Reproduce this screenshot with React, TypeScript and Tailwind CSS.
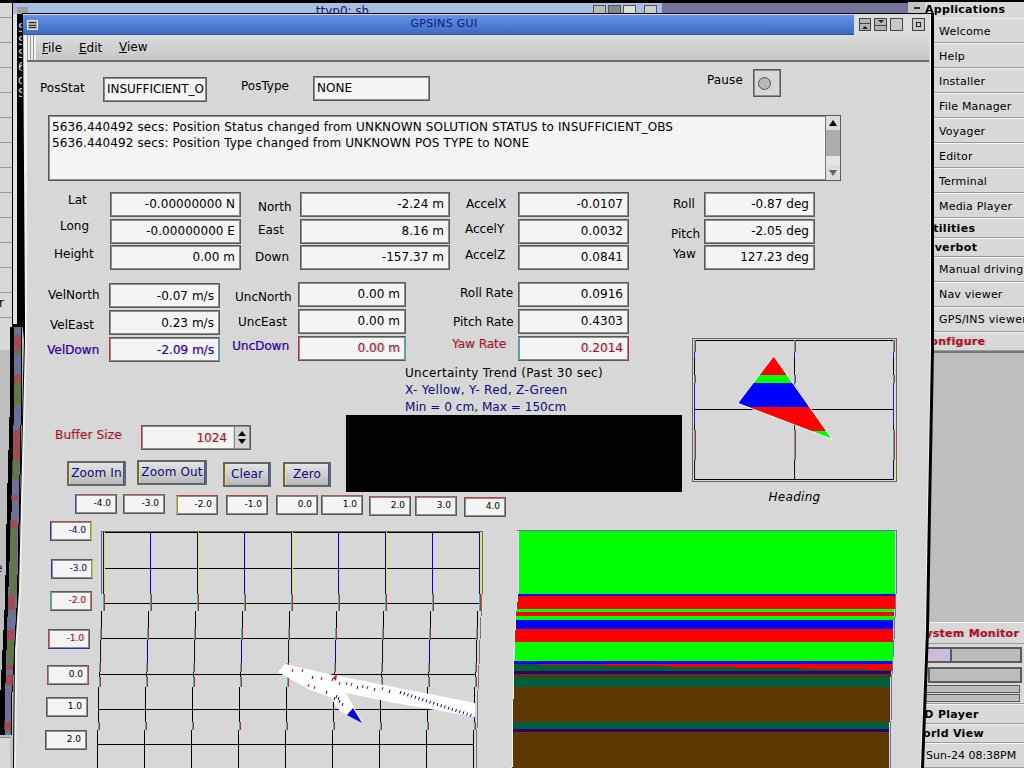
import React from 'react';

const FONT = "font-['DejaVu_Sans','Liberation_Sans',sans-serif]";
const BLUE = 'text-[#0808b0] [text-shadow:1px_0_0_rgba(220,220,30,0.55)]';
const RED = 'text-[#c80014] [text-shadow:1px_0_0_rgba(40,200,200,0.6)]';
const MIX = 'text-[#0808b8] [text-shadow:1px_0_0_rgba(220,30,30,0.45)]';
const BOX = 'border border-[#5a5a5a] shadow-[inset_0_0_0_1px_#8c8c8c]';

function Label({ text, className = '' }: { text: string; className?: string }) {
  return <span className={`block whitespace-nowrap text-[12px] leading-[14px] ${className}`}>{text}</span>;
}

function Field({ value, className = '', tone = '' }: { value: string; className?: string; tone?: string }) {
  return (
    <div className={`h-[25px] ${BOX} bg-[#f4f4f4] flex items-center justify-end pr-[5px] text-[12px] tracking-[0.04px] text-black whitespace-nowrap ${className}`}>
      <span className={tone}>{value}</span>
    </div>
  );
}

function Tick({ value, className = '', tone = '' }: { value: string; className?: string; tone?: string }) {
  return (
    <div className={`w-[42px] h-[20px] ${BOX} bg-[#f4f4f4] flex items-center justify-end pr-[5px] text-[9px] text-black ${className}`}>
      <span className={tone}>{value}</span>
    </div>
  );
}

function Btn({ text, className = '' }: { text: string; className?: string }) {
  return (
    <button className={`h-[25px] pb-[2px] border-2 border-[#666] shadow-[inset_1px_0_0_#e8e840,inset_-1px_0_0_#4848c0] bg-gradient-to-b from-[#e4e4e4] to-[#b8b8b8] text-[12px] tracking-[0.15px] whitespace-nowrap ${BLUE} ${className}`}>
      {text}
    </button>
  );
}

function Stripes({ className = '' }: { className?: string }) {
  return (
    <div className={`bg-[#a8a8a8] border border-[#e8e8e8] flex flex-col justify-evenly px-px ${className}`}>
      <div className="h-px bg-[#333]" />
      <div className="h-px bg-[#333]" />
      <div className="h-px bg-[#333]" />
    </div>
  );
}

const groupOne = [
  { l: 'Lat', lc: 'ml-[20px] mt-px', v: '-0.00000000 N', n: 'North', nc: 'ml-[17px] mt-[8px]', nv: '-2.24 m', a: 'AccelX', ac: 'ml-[16px] mt-[5px]', av: '-0.0107', r: 'Roll', rc: 'ml-[44px] mt-[5px]', rv: '-0.87 deg' },
  { l: 'Long', lc: 'ml-[12px]', v: '-0.00000000 E', n: 'East', nc: 'ml-[17px] mt-[4px]', nv: '8.16 m', a: 'AccelY', ac: 'ml-[15px] mt-[3px]', av: '0.0032', r: 'Pitch', rc: 'ml-[42px] mt-[8px]', rv: '-2.05 deg' },
  { l: 'Height', lc: 'ml-[6px] mt-[2px]', v: '0.00 m', n: 'Down', nc: 'ml-[14px] mt-[5px]', nv: '-157.37 m', a: 'AccelZ', ac: 'ml-[15px] mt-[3px]', av: '0.0841', r: 'Yaw', rc: 'ml-[44px] mt-[2px]', rv: '127.23 deg' },
];

const groupTwo = [
  { l: 'VelNorth', lc: 'mt-[6px]', v: '-0.07 m/s', fc: 'mt-px', n: 'UncNorth', nc: 'ml-[15px] mt-[8px]', nv: '0.00 m', a: 'Roll Rate', ac: 'ml-[54px] mt-[4px]', av: '0.0916', t: '' },
  { l: 'VelEast', lc: 'ml-[2px] mt-[9px]', v: '0.23 m/s', fc: 'mt-px', n: 'UncEast', nc: 'ml-[18px] mt-[6px]', nv: '0.00 m', a: 'Pitch Rate', ac: 'ml-[47px] mt-[6px]', av: '0.4303', t: '' },
  { l: 'VelDown', lc: `ml-[-1px] mt-[7px] ${MIX}`, v: '-2.09 m/s', fc: 'mt-px border-l-[#c03030] border-r-[#30b0b0]', n: 'UncDown', nc: `ml-[12px] mt-[3px] ${MIX}`, nv: '0.00 m', a: 'Yaw Rate', ac: `ml-[46px] mt-px ${RED}`, av: '0.2014', t: 'x' },
];

const xTicks = [
  { v: '-4.0', c: 'ml-[75px] border-t-[#a06060] border-l-[#4040c0]' },
  { v: '-3.0', c: 'ml-[6px] border-t-[#a06060]' },
  { v: '-2.0', c: 'ml-[11px] mt-px border-t-[#c04040] border-l-[#c8c820]' },
  { v: '-1.0', c: 'ml-[8px] mt-px border-t-[#c04040]' },
  { v: '0.0', c: 'ml-[8px] mt-px border-t-[#a06060]' },
  { v: '1.0', c: 'ml-[3px] mt-px border-t-[#a06060]' },
  { v: '2.0', c: 'ml-[6px] mt-[2px] border-t-[#a06060]' },
  { v: '3.0', c: 'ml-[4px] mt-[2px] border-t-[#a06060]' },
  { v: '4.0', c: 'ml-[7px] mt-[3px] border-t-[#c04040]' },
];

const yTicks = [
  { v: '-4.0', c: 'ml-[5px] mt-[4px] border-t-[#c04040] border-l-[#3030c0] border-r-[#c8c820]', t: BLUE },
  { v: '-3.0', c: 'ml-[6px] mt-[18px] border-l-[#3030c0] border-r-[#c8c820]', t: BLUE },
  { v: '-2.0', c: 'ml-[5px] mt-[12px] border-l-[#30b0b0] border-r-[#c04040]', t: RED },
  { v: '-1.0', c: 'ml-[3px] mt-[18px] border-l-[#c04040] border-b-[#3030c0]', t: RED },
  { v: '0.0', c: 'ml-[2px] mt-[16px] border-l-[#c04040] border-r-[#c04040]', t: '' },
  { v: '1.0', c: 'ml-[1px] mt-[12px]', t: '' },
  { v: '2.0', c: 'ml-0 mt-[13px]', t: '' },
];

// [y0, y1, x shift, colour kind]: the picture tears sideways on the way down
const tears: [number, number, number, string][] = [
  [532, 594, 0, 'by'],
  [594, 611, 0, 'rc'],
  [611, 628, -2, 'k'],
  [628, 640, -2.5, 'rc'],
  [640, 663, -3, 'by'],
  [663, 672, -3.5, 'rc'],
  [672, 677, -4, 'k'],
  [677, 687, -4, 'rc'],
  [687, 722, -5, 'k'],
  [722, 730, -5, 'rc'],
  [730, 768, -6, 'k'],
];

const gridX = [103, 150, 197, 244, 291, 338, 385, 432, 479];
const gridY: [number, number, number][] = [
  [532, 103, 480],
  [568, 103, 480],
  [603, 103, 480],
  [638, 101, 477],
  [674, 99, 476],
  [709, 98, 475],
  [744, 97, 473],
];

const redDash = [[293, 669], [303, 669], [322, 677], [340, 682], [347, 682], [352, 683], [363, 685], [368, 686], [383, 687], [309, 684], [315, 686]];
const blueDash = [
  [313, 676], [333, 678], [358, 686], [375, 688], [390, 690], [327, 691], [335, 697], [340, 700], [343, 703], [337, 695], [339, 697],
  ...Array.from({ length: 20 }, (_, i) => [401 + i * 3.7, 691 + i * 1.2]),
];

function GroundChart() {
  return (
    <svg width={390} height={251} viewBox="95 517 390 251" shapeRendering="crispEdges" className="shrink-0">
      <path d="M101 531H482V594M101 531V594" stroke="#666" strokeWidth={1} fill="none" />
      <path d="M482 594L480 640L478 690L476 768" stroke="#777" strokeWidth={1} fill="none" />
      {gridY.map(([y, a, b]) => (
        <line key={y} x1={a} x2={b} y1={y} y2={y} stroke="#000" />
      ))}
      {gridX.map((x, i) =>
        tears.map(([a, b, dx, kind]) => (
          <g key={`${x}-${a}`}>
            {kind === 'k' && <line x1={x + dx} x2={x + dx} y1={a} y2={b} stroke="#000" />}
            {kind === 'by' && <line x1={x + dx} x2={x + dx} y1={a} y2={b} stroke="#0000e0" />}
            {kind === 'by' && i % 2 === 0 && <line x1={x + dx + 1} x2={x + dx + 1} y1={a} y2={b} stroke="#e8e800" />}
            {kind === 'rc' && <line x1={x + dx} x2={x + dx} y1={a} y2={b} stroke="#20c0c0" />}
            {kind === 'rc' && <line x1={x + dx + 1} x2={x + dx + 1} y1={a} y2={b} stroke="#e02020" />}
          </g>
        )),
      )}
      <polygon
        shapeRendering="auto"
        points="278,672 285,664 333,675 475,703 475,717 395,703 346,693 363,723 340,711 330,697 310,690"
        fill="#fff"
      />
      {redDash.map(([x, y]) => (
        <line key={`r${x}`} x1={x} y1={y} x2={x - 1} y2={y + 3} stroke="#f00000" shapeRendering="auto" />
      ))}
      {blueDash.map(([x, y]) => (
        <line key={`b${x}`} x1={x} y1={y} x2={x - 1} y2={y + 3} stroke="#0000e0" shapeRendering="auto" />
      ))}
      <polygon shapeRendering="auto" points="333,678 337,674 336,681" fill="#f00000" />
      <polygon shapeRendering="auto" points="347,715 353,708 362,723" fill="#0000e0" />
    </svg>
  );
}

const bands: [number, number, number, number, string][] = [
  [531, 594, 518, 895, '#00ff00'],
  [594, 596, 517, 895, '#0000ff'],
  [596, 609, 517, 895, '#ff0000'],
  [609, 612, 516, 894, '#00ff00'],
  [612, 616, 516, 894, '#ff0000'],
  [616, 620, 515, 894, '#00ff00'],
  [620, 629, 515, 893, '#0000ff'],
  [629, 642, 515, 893, '#ff0000'],
  [642, 661, 515, 893, '#00ff00'],
  [661, 664, 514, 892, '#0000ff'],
  [664, 671, 514, 892, '#005f3a'],
  [671, 674, 514, 891, '#300070'],
  [674, 677, 513, 891, '#5c3700'],
  [677, 687, 513, 890, '#005f3a'],
  [687, 722, 513, 890, '#5c3700'],
  [722, 729, 513, 889, '#005f3a'],
  [729, 732, 512, 889, '#300070'],
  [732, 768, 512, 889, '#5c3700'],
];

const wedge = [
  [538, 892, 1],
  [604, 892, 2],
  [670, 892, 3],
  [735, 892, 4],
  [801, 892, 5],
  [867, 892, 6],
];

function HorizonChart() {
  return (
    <svg width={390} height={251} viewBox="510 517 390 251" shapeRendering="crispEdges" className="ml-[25px] shrink-0">
      <path d="M517 530.5H896V594L894 640L892 674L890 768" stroke="#6a6ac0" fill="none" />
      {bands.map(([a, b, l, r, c]) => (
        <rect key={a} x={l} y={a} width={r - l} height={b - a} fill={c} />
      ))}
      {wedge.map(([x, r, h]) => (
        <rect key={x} x={x} y={664} width={r - x} height={h} fill="#ff0000" />
      ))}
      <path d="M518 531V594L516 610L514 650L513 700L512 768" stroke="#f2f2f2" fill="none" />
    </svg>
  );
}

function HeadingGauge() {
  const seg = (x: number, a: number, b: number, c: string) => (
    <line key={`${x}${a}${c}`} x1={x} x2={x} y1={a} y2={b} stroke={c} />
  );
  return (
    <svg width={206} height={146} viewBox="692 337 206 146" shapeRendering="crispEdges" className="block">
      <defs>
        <linearGradient id="hdg" gradientUnits="userSpaceOnUse" x1="0" x2="0" y1="356" y2="440">
          <stop offset="0.226" stopColor="#ff0000" />
          <stop offset="0.226" stopColor="#00ff00" />
          <stop offset="0.325" stopColor="#00ff00" />
          <stop offset="0.325" stopColor="#0000ff" />
          <stop offset="0.611" stopColor="#0000ff" />
          <stop offset="0.611" stopColor="#ff0000" />
          <stop offset="0.889" stopColor="#ff0000" />
          <stop offset="0.889" stopColor="#00ff00" />
        </linearGradient>
      </defs>
      <rect x={692.5} y={338.5} width={204} height={143} fill="none" stroke="#666" />
      <rect x={694.5} y={340.5} width={199} height={138.5} fill="none" stroke="#000" />
      <line x1={695} x2={893} y1={409} y2={409} stroke="#000" />
      <line x1={794} x2={794} y1={341} y2={479} stroke="#000" />
      {[694, 794, 893].flatMap((x) => [
        seg(x, 340, 352, '#20c0c0'),
        seg(x + 1, 340, 352, '#e02020'),
        seg(x, 352, 358, '#2020d0'),
        seg(x, 375, 383, '#20c0c0'),
        seg(x + 1, 375, 383, '#e02020'),
        seg(x, 383, 425, '#2020d0'),
        seg(x, 430, 460, '#20c0c0'),
        seg(x + 1, 430, 460, '#e02020'),
        seg(x, 460, 479, '#0000e0'),
        seg(x + 1, 460, 479, '#e8e800'),
      ])}
      <polygon
        points="773.7,356 832.3,439.3 737.7,403.3"
        fill="url(#hdg)"
        stroke="#fff"
        strokeWidth={1}
        shapeRendering="auto"
      />
    </svg>
  );
}

const sideRows = ['Welcome', 'Help', 'Installer', 'File Manager', 'Voyager', 'Editor', 'Terminal', 'Media Player'];

function SideRow({ text, className = '' }: { text: string; className?: string }) {
  return (
    <div className={`flex items-center border-b border-b-[#9a9a9a] border-t border-t-[#f2f2f2] text-[11px] text-black whitespace-nowrap ${className}`}>
      {text}
    </div>
  );
}

function SideHead({ text, className = '', tone = '' }: { text: string; className?: string; tone?: string }) {
  return (
    <div className={`flex items-center pt-[2px] border-b border-b-[#9a9a9a] border-t border-t-[#f2f2f2] text-[11px] font-bold tracking-[0.3px] whitespace-nowrap ${tone || 'text-black'} ${className}`}>
      {text}
    </div>
  );
}

function LeftNoise() {
  const tints: [number, number, string][] = [
    [335, 350, '#b04040'], [350, 355, '#5c7a30'], [375, 383, '#b04040'], [383, 405, '#5c7a30'],
    [430, 460, '#b04040'], [460, 480, '#5c7a30'], [495, 500, '#b04040'], [520, 528, '#b04040'],
    [528, 595, '#5c7a30'], [595, 610, '#b04040'], [630, 640, '#b04040'], [640, 665, '#5c7a30'],
    [665, 670, '#b04040'], [675, 685, '#b04040'], [722, 730, '#b04040'],
  ];
  return (
    <svg width={28} height={468} viewBox="0 300 28 468" shapeRendering="crispEdges" className="absolute left-0 top-[300px]">
      <polygon points="10,327 22,327 22,400 20,500 18,600 12,700 12,735 0,735 0,700 5,600 7,500 10,400" fill="#000" />
      <polygon points="14,327 21,327 21,400 19,500 17,600 11,700 11,735 5,735 5,700 8,600 12,500 14,400" fill="#6f6f98" />
      {tints.map(([a, b, c]) => {
        const off = Math.max(0, a - 400) * 0.03;
        return <rect key={a} x={14 - off} y={a} width={7} height={b - a} fill={c} opacity={0.75} />;
      })}
    </svg>
  );
}

export default function App() {
  return (
    <div className={`relative w-[1024px] h-[768px] overflow-hidden bg-[#bebebe] text-black ${FONT}`}>
      {/* left launcher, mostly hidden */}
      <div className="absolute left-0 top-0 w-[12px] h-[350px] bg-[#d8d8d8] flex flex-col pt-[17px]">
        {Array.from({ length: 13 }, (_, i) => (
          <div key={i} className="h-[25px] shrink-0 border-t border-t-[#9a9a9a] flex items-end text-[12px]">
            <span className="ml-[-1px] mb-[5px]">{i === 11 ? 'r' : ''}</span>
          </div>
        ))}
      </div>
      <div className="absolute left-0 top-[737px] w-[10px] h-[31px] bg-[#d8d8d8] border-t border-t-[#888]" />
      <span className={`absolute left-[-5px] top-[561px] text-[12px] leading-[14px] ${BLUE}`}>e</span>

      {/* window behind */}
      <div className="absolute left-0 top-0 w-full h-[3px] bg-black" />
      <div className="absolute left-[12px] top-[3px] w-[650px] h-[324px] bg-black flex">
        <div className="ml-px mt-[11px] w-[4px] h-[310px] bg-[#e2e2e2]" />
        <div className="absolute left-[1px] top-0 w-[649px] h-[11px] bg-[#a8bfe0] flex justify-center">
          <div className="absolute left-[4px] top-[4px] w-[11px] h-[7px] bg-[#a0a0a0]" />
          <span className="mt-[1px] ml-[10px] text-[12px] leading-[14px] text-[#10107a]">ttyp0: sh</span>
          <div className="absolute right-[5px] top-[2px] flex gap-[2px]">
            <div className="w-[13px] h-[9px] bg-[#bbb] border border-[#555]" />
            <div className="w-[13px] h-[9px] bg-[#888] border border-[#555]" />
            <div className="w-[13px] h-[9px] bg-[#ddd] border border-[#555]" />
            <div className="ml-[6px] w-[13px] h-[9px] bg-[#ccc] border border-[#555]" />
          </div>
        </div>
        <div className="mt-[19px] ml-px text-[12px] leading-[13px] text-[#ddd] flex flex-col">
          {['S', 'S', 'S', '6', 'd', 'S'].map((c, i) => (
            <span key={i}>{c}</span>
          ))}
        </div>
      </div>
      <div className="absolute left-[662px] top-[3px] w-[250px] h-[11px] bg-[#74749a]" />
      <LeftNoise />

      {/* applications panel */}
      <div className="absolute left-[908px] top-0 w-[116px] h-[768px] flex flex-col">
        <div className="h-[3px] bg-black -mb-px" />
        <div className="relative h-[16px] bg-[#d8d8d8] flex items-center pl-[17px] text-[11px] font-bold tracking-[0.3px]">
          <div className="absolute left-[0px] top-0 w-[17px] h-[11px] bg-[#c4c4c4] flex items-center justify-center">
            <div className="w-[6px] h-[2px] bg-[#333]" />
          </div>
          Applications
        </div>
        <div className="bg-[#d8d8d8]">
          {sideRows.map((r) => (
            <SideRow key={r} text={r} className="h-[25px] pl-[31px] pt-[3px] tracking-[0.2px]" />
          ))}
          <SideHead text="Utilities" className="h-[20px] pl-[16px]" />
          <SideHead text="Overbot" className="h-[19px] pl-[17px]" />
          <SideRow text="Manual driving" className="h-[25px] pl-[31px] pt-[2px] tracking-[0.2px]" />
          <SideRow text="Nav viewer" className="h-[25px] pl-[31px] pt-[2px] tracking-[0.2px]" />
          <SideRow text="GPS/INS viewer" className="h-[25px] pl-[31px] pt-[2px] tracking-[0.25px]" />
          <SideHead text="Configure" className="h-[19px] pl-[14px]" tone={RED} />
        </div>
        <div className="h-[271px] bg-[#bebebe] border-t-2 border-t-[#777]" />
        <div className="bg-[#d8d8d8]">
          <SideHead text="System Monitor" className="h-[22px] pl-[9px]" tone={RED} />
          <div className="h-[60px] pt-[3px] pl-[9px] pr-[2px] border-b border-b-[#9a9a9a] flex flex-col">
            <div className="h-[16px] flex border-2 border-[#5a5a5a] bg-[#bcbcbc]">
              <div className="w-[33px] bg-[#cdbcd9] border-r-2 border-r-[#5a5a5a]" />
            </div>
            <div className="mt-[4px] ml-[11px] h-[16px] border-2 border-[#5a5a5a] bg-[#bcbcbc]" />
            <div className="mt-[2px] mr-[2px] h-[8px] border border-[#5a5a5a] bg-[#bcbcbc]" />
            <div className="mt-[1px] mr-[2px] h-[8px] border border-[#5a5a5a] bg-[#bcbcbc]" />
          </div>
          <SideHead text="CD Player" className="h-[20px] pl-[8px]" />
          <SideHead text="World View" className="h-[19px] pl-[3px]" />
          <SideRow text="Sun-24 08:38PM" className="h-[25px] pl-[18px] pt-[2px]" />
        </div>
      </div>

      {/* GPSINS window frame */}
      <div className="absolute inset-0 bg-black [clip-path:polygon(22px_13px,934px_13px,934px_350px,931px_510px,929px_630px,924px_768px,13px_768px,14px_650px,18px_590px,20px_500px,24px_340px,22px_320px)]" />
      <div className="absolute inset-0 bg-[#efefef] [clip-path:polygon(23px_14px,931px_14px,931px_350px,928px_510px,926px_630px,921px_768px,14px_768px,15px_650px,19px_590px,21px_500px,25px_340px,25px_320px)]" />

      <div className="absolute inset-0 bg-[#d7d7d7] flex flex-col pt-[15px] [clip-path:polygon(23px_14px,930px_14px,930px_350px,927px_510px,925px_630px,920px_768px,16px_768px,17px_650px,21px_590px,23px_500px,27px_340px,27px_35px,23px_35px)]">
        {/* title bar */}
        <div className="ml-[23px] w-[907px] h-[20px] flex shrink-0">
          <div className="relative flex-1 h-full bg-gradient-to-b from-[#6592e6] to-[#3d6bc5] border-b border-b-[#2f4f90] flex items-center justify-center">
            <Stripes className="absolute left-[4px] top-[5px] w-[11px] h-[10px]" />
            <span className="ml-[11px] text-[11px] tracking-[0.3px] text-[#101a78]">GPSINS GUI</span>
          </div>
          <div className="w-[76px] h-full bg-[#dcdcdc] flex items-start gap-[3px] pt-[3px] pl-[5px]">
            <div className="w-[12px] h-[13px] bg-[#b4b4b4] border border-[#444] flex flex-col justify-end items-center">
              <div className="w-full h-px bg-[#444] mb-[2px]" />
              <div className="w-0 h-0 border-x-[3px] border-x-transparent border-b-[3px] border-b-[#222] mb-px" />
            </div>
            <div className="w-[13px] h-[13px] bg-[#b4b4b4] border border-[#444] flex flex-col items-center">
              <div className="w-0 h-0 border-x-[3px] border-x-transparent border-t-[3px] border-t-[#222] mt-px" />
              <div className="w-full h-px bg-[#444] mt-[2px]" />
            </div>
            <div className="w-[13px] h-[13px] bg-[#c8c8c8] border border-[#444]" />
            <div className="ml-[6px] w-[13px] h-[13px] bg-[#c8c8c8] border border-[#444] flex items-center justify-center">
              <div className="w-[5px] h-[5px] border border-[#222]" />
            </div>
          </div>
        </div>

        {/* menu bar */}
        <div className="ml-[27px] w-[902px] h-[27px] shrink-0 flex items-center bg-gradient-to-b from-[#dcdcdc] to-[#c6c6c6] border-b-2 border-b-[#6c6c6c] text-[12px]">
          <div className="w-[9px] h-full bg-[repeating-linear-gradient(90deg,#9a9a9a_0,#9a9a9a_1px,#eeeeee_1px,#eeeeee_3px)]" />
          <div className="ml-[6px] w-[37px]"><u>F</u>ile</div>
          <div className="w-[40px]"><u>E</u>dit</div>
          <div className="mt-[-2px]"><u>V</u>iew</div>
        </div>

        {/* status row */}
        <div className="ml-[40px] mt-[7px] h-[33px] flex items-start shrink-0">
          <Label text="PosStat" className="w-[63px] mt-[12px]" />
          <div className={`w-[104px] h-[25px] mt-[8px] ${BOX} bg-[#f4f4f4] flex items-center pl-[3px] text-[12px] tracking-[-0.05px] whitespace-nowrap overflow-hidden`}>
            <span className="mt-[-1px]">INSUFFICIENT_O</span>
          </div>
          <Label text="PosType" className="ml-[34px] w-[72px] mt-[10px]" />
          <div className={`w-[117px] h-[25px] mt-[7px] ${BOX} bg-[#f4f4f4] flex items-center pl-[3px] text-[12px]`}>
            <span className="mt-[-1px]">NONE</span>
          </div>
          <Label text="Pause" className="ml-[277px] w-[46px] mt-[4px] tracking-[0.15px]" />
          <div className={`w-[28px] h-[28px] ${BOX} flex items-center pl-[4px]`}>
            <div className="w-[13px] h-[13px] rounded-full bg-[#b8b8b8] border border-[#555]" />
          </div>
        </div>

        {/* log */}
        <div className={`ml-[48px] mt-[13px] w-[793px] h-[66px] shrink-0 flex ${BOX} bg-[#f4f4f4]`}>
          <div className="flex-1 pl-[3px] pt-[3px] text-[12px] tracking-[0.125px] leading-[16px] whitespace-nowrap">
            <div>5636.440492 secs: Position Status changed from UNKNOWN SOLUTION STATUS to INSUFFICIENT_OBS</div>
            <div>5636.440492 secs: Position Type changed from UNKNOWN POS TYPE to NONE</div>
          </div>
          <div className="w-[15px] h-full border-l border-l-[#777] bg-[#d8d8d8] flex flex-col">
            <div className="h-[14px] flex items-center justify-center bg-[#dcdcdc]">
              <div className="w-0 h-0 border-x-[4px] border-x-transparent border-b-[6px] border-b-black" />
            </div>
            <div className="h-[26px] bg-[#acacac]" />
            <div className="h-[9px] bg-[#e4e4e4]" />
            <div className="flex-1 flex items-center justify-center bg-[#dcdcdc]">
              <div className="w-0 h-0 border-x-[4px] border-x-transparent border-t-[6px] border-t-[#666]" />
            </div>
          </div>
        </div>

        {/* position grid */}
        <div className="ml-[48px] mt-[11px] shrink-0 grid grid-cols-[62px_131px_59px_150px_68px_111px_75px_111px] grid-rows-[27px_26px_24px]">
          {groupOne.map((r) => (
            <React.Fragment key={r.l}>
              <Label text={r.l} className={r.lc} />
              <Field value={r.v} className="h-[24px] pb-[2px]" />
              <Label text={r.n} className={r.nc} />
              <Field value={r.nv} className="h-[24px] pb-[2px]" />
              <Label text={r.a} className={r.ac} />
              <Field value={r.av} className="h-[24px] pb-[2px]" />
              <Label text={r.r} className={r.rc} />
              <Field value={r.rv} className="h-[24px] pb-[2px]" />
            </React.Fragment>
          ))}
        </div>

        {/* lower block */}
        <div className="ml-[48px] mt-[13px] h-[212px] shrink-0 flex items-start">
          <div className="w-[634px] flex flex-col">
            <div className="grid grid-cols-[61px_111px_78px_108px_112px_111px] grid-rows-[27px_27px_26px]">
              {groupTwo.map((r) => (
                <React.Fragment key={r.l}>
                  <Label text={r.l} className={r.lc} />
                  <Field value={r.v} className={r.fc} tone={r.t ? MIX : ''} />
                  <Label text={r.n} className={r.nc} />
                  <Field value={r.nv} className={`pb-[2px] ${r.t ? 'border-l-[#c03030] border-r-[#30b0b0]' : ''}`} tone={r.t ? RED : ''} />
                  <Label text={r.a} className={r.ac} />
                  <Field value={r.av} className={`pb-[2px] ${r.t ? 'border-l-[#30b0b0] border-r-[#c03030]' : ''}`} tone={r.t ? RED : ''} />
                </React.Fragment>
              ))}
            </div>
            <div className="flex">
              <div className="w-[298px] flex flex-col">
                <div className="mt-[63px] flex items-start">
                  <Label text="Buffer Size" className={`ml-[7px] w-[86px] mt-[3px] tracking-[0.15px] ${RED}`} />
                  <div className={`flex ${BOX} w-[110px] h-[25px] border-l-[#c03030]`}>
                    <div className={`flex-1 bg-[#f4f4f4] flex items-center justify-end pr-[6px] text-[12px] m-px ${RED}`}>1024</div>
                    <div className="w-[15px] my-px mr-px flex flex-col items-center justify-evenly bg-[#d4d4d4] border-l border-l-[#888]">
                      <div className="w-0 h-0 border-x-[4px] border-x-transparent border-b-[5px] border-b-black" />
                      <div className="w-0 h-0 border-x-[4px] border-x-transparent border-t-[5px] border-t-black" />
                    </div>
                  </div>
                </div>
                <div className="mt-[10px] flex items-start">
                  <Btn text="Zoom In" className="ml-[19px] mt-px w-[59px]" />
                  <Btn text="Zoom Out" className="ml-[11px] w-[70px]" />
                  <Btn text="Clear" className="ml-[16px] mt-[2px] w-[48px]" />
                  <Btn text="Zero" className="ml-[12px] mt-[2px] w-[48px]" />
                </div>
              </div>
              <div className="w-[336px] flex flex-col">
                <div className="h-[53px] pl-[59px] pt-[3px] text-[12px] leading-[17px] whitespace-nowrap">
                  <div className="tracking-[0.32px]">Uncertainty Trend (Past 30 sec)</div>
                  <div className={`tracking-[0.33px] ${BLUE}`}>X- Yellow, Y- Red, Z-Green</div>
                  <div className={`tracking-[0.05px] ${BLUE}`}>Min = 0 cm, Max = 150cm</div>
                </div>
                <div className="h-[77px] bg-black" />
              </div>
            </div>
          </div>
          <div className="ml-[10px] mt-[55px] flex flex-col">
            <HeadingGauge />
            <div className="mt-[7px] ml-[-1px] text-center text-[12px] tracking-[0.3px] leading-[14px] italic">Heading</div>
          </div>
        </div>

        {/* x axis labels */}
        <div className="h-[23px] shrink-0 flex items-start">
          {xTicks.map((t) => (
            <Tick key={t.v} value={t.v} className={t.c} />
          ))}
        </div>

        {/* charts */}
        <div className="flex-1 flex items-start">
          <div className="ml-[45px] w-[48px] shrink-0 flex flex-col">
            {yTicks.map((t) => (
              <Tick key={t.v} value={t.v} className={t.c} tone={t.t} />
            ))}
          </div>
          <div className="ml-[2px] flex">
            <GroundChart />
            <HorizonChart />
          </div>
        </div>
      </div>
    </div>
  );
}
